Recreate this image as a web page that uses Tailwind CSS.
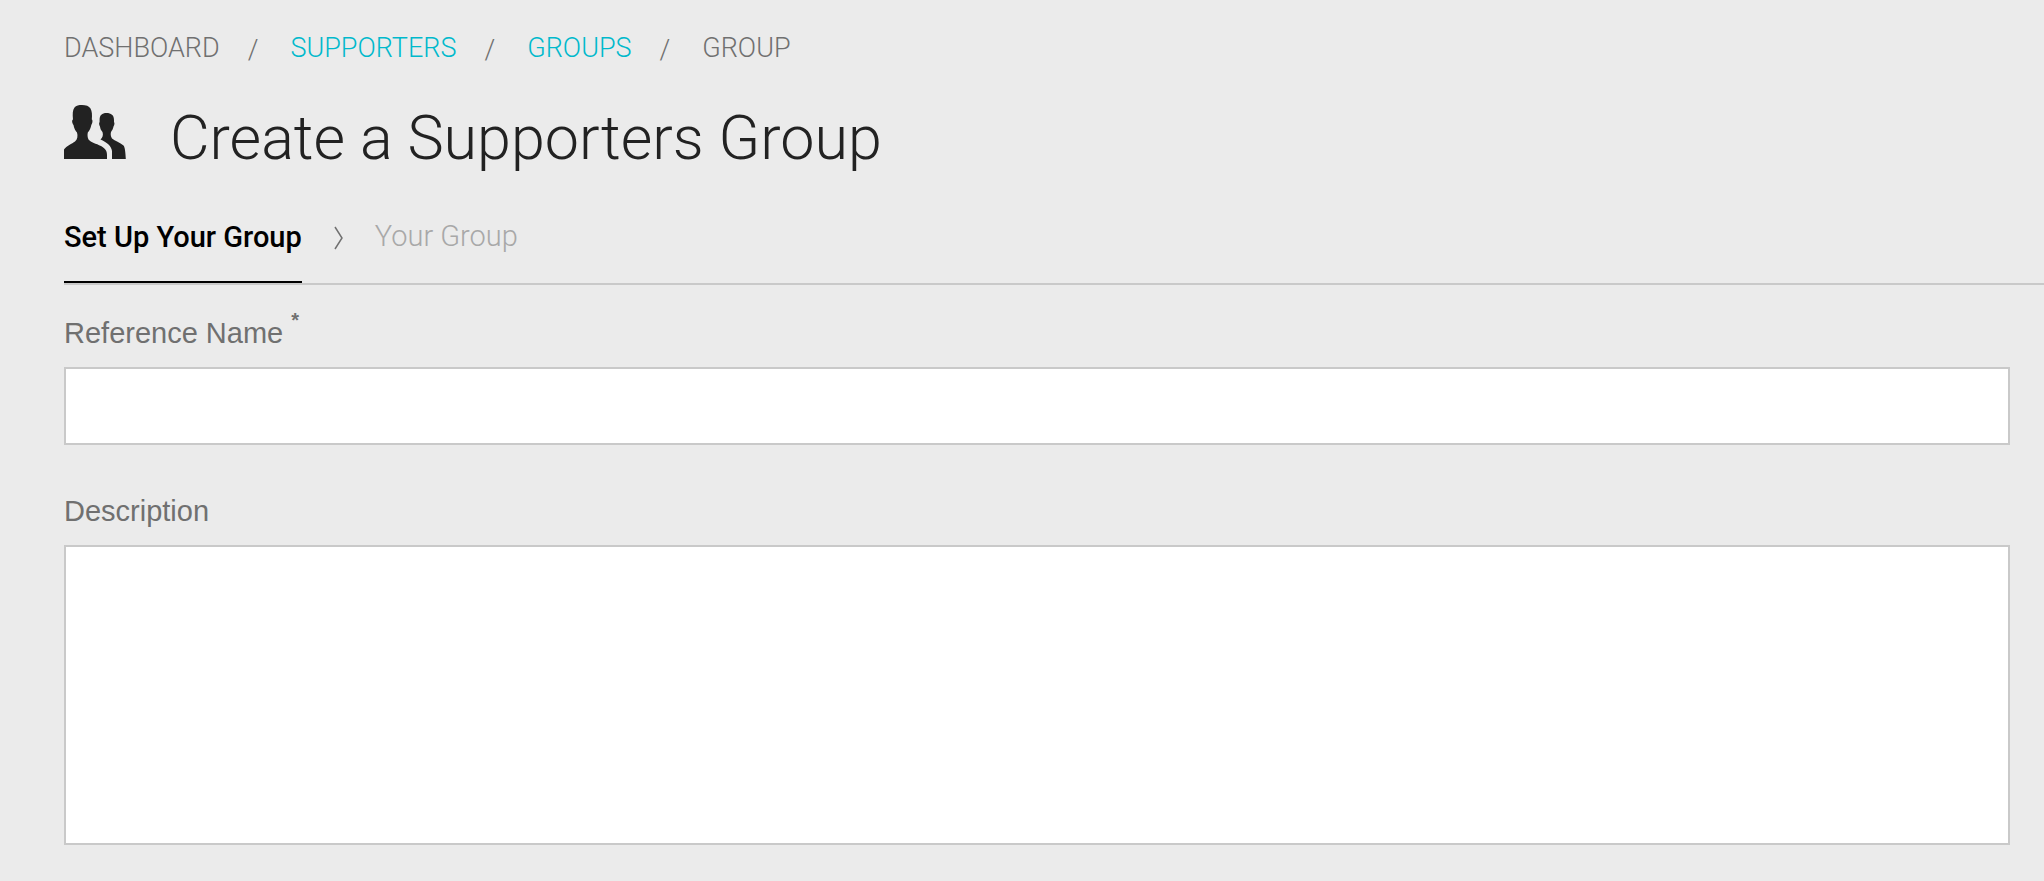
<!DOCTYPE html>
<html lang="en">
<head>
  <meta charset="UTF-8" />
  <meta name="viewport" content="width=device-width, initial-scale=1.0" />
  <title>Create a Supporters Group</title>
  <script src="https://cdn.jsdelivr.net/npm/@tailwindcss/browser@4"></script>
</head>
<body class="bg-[#ebebeb] min-h-screen pl-16 pt-[26px] pb-9 font-['Roboto',sans-serif]">
  <nav aria-label="Breadcrumb" class="text-[27px] leading-10 font-light text-[#707070]">
    <ol class="flex items-center">
      <li>DASHBOARD</li>
      <li aria-hidden="true" class="pt-1 pl-7 pr-8">/</li>
      <li><a href="#" class="text-[#00b9cc]">SUPPORTERS</a></li>
      <li aria-hidden="true" class="pt-1 pl-7 pr-8">/</li>
      <li><a href="#" class="text-[#00b9cc]">GROUPS</a></li>
      <li aria-hidden="true" class="pt-1 pl-7 pr-8">/</li>
      <li aria-current="page">GROUP</li>
    </ol>
  </nav>

  <header class="mt-7 flex items-start gap-11 text-[#222]">
    <svg class="mt-1.5 w-[62px] h-[56px]" viewBox="0 0 62 56" fill="currentColor" aria-hidden="true">
      <path d="M18 1C22 1 25 2 26.500 4.500C28 7 28.300 11 27.800 15.500C29 16 28.500 19.500 27.300 21C26.700 24.500 25.500 26.500 23.800 28.500C23.300 31 23.500 33 24.500 35.500C27 38.500 32 39.500 37 42C41.500 44.500 43 47 43 51V55H0V45.500C2.500 42 8 39.800 11 37.500C13.500 35.500 14 32 13 28.500C11.300 26.500 10 24 9.500 21C8 19 7.700 16 9 15.500C8.500 10 8.500 6 10.500 3.500C12 1.500 15 1 18 1Z"/>
      <path d="M42.500 9C47 9 50 11 50 16V18C50.800 19 50.500 21 49.500 22.500C49 25 48 26.500 47 28C46.500 30 46.500 32 48 34.500C51 37 56 38.500 59.500 41.500C61 43 61.500 49 61.800 55H48V47C47.500 42 42.500 38 36.500 35.500C38.500 34 39.500 31 38.500 28C37.200 26.500 36.300 25 36 22.500C35 21 34.800 19 35.600 18V16C35.600 11 38 9 42.500 9Z"/>
    </svg>
    <h1 class="text-[61px] leading-[80px] font-[340]">Create a Supporters Group</h1>
  </header>

  <ol class="mt-7 flex items-start text-[29px] leading-[60px] border-b-2 border-[#c9c9c9]">
    <li aria-current="step" class="pt-px pb-3.5 font-medium text-black border-b-2 border-black">Set Up Your Group</li>
    <li aria-hidden="true" class="pt-5 px-8 text-[#707070]">
      <svg class="block w-[9px] h-6" viewBox="0 0 9 24" fill="none" stroke="currentColor" stroke-width="1.500"><path d="M1 1L8 12L1 23"/></svg>
    </li>
    <li class="font-[340] text-[#a8a8a8]">Your Group</li>
  </ol>

  <form class="pr-[34px] text-[29px] text-[#707070] font-['Liberation_Sans',Arial,sans-serif]">
    <label for="reference-name" class="mt-7 block leading-10">Reference Name <sup class="-top-4 text-[20px] font-bold">*</sup></label>
    <input id="reference-name" type="text" required class="mt-3.5 block w-full h-[78px] px-4 bg-white border-2 border-[#c9c9c9]" />

    <label for="description" class="mt-[46px] block leading-10">Description</label>
    <textarea id="description" class="mt-3.5 block w-full h-[300px] p-4 bg-white border-2 border-[#c9c9c9] resize-none"></textarea>
  </form>
</body>
</html>
